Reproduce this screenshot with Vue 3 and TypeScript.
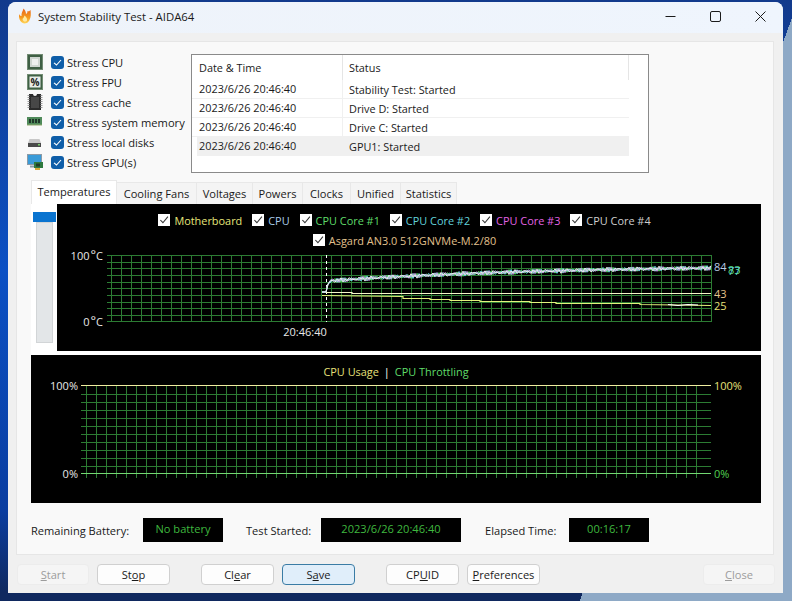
<template>
  <div class="desktop">
    <div class="window">
      <header class="titlebar">
        <svg class="flame" width="14" height="16" viewBox="0 0 14 16">
          <defs>
            <linearGradient id="flameFill" x1="0" y1="0" x2="0" y2="1">
              <stop offset="0" stop-color="#e8641c" />
              <stop offset="0.6" stop-color="#f59a1e" />
              <stop offset="1" stop-color="#ffd65a" />
            </linearGradient>
          </defs>
          <path d="M1 6 C2 8 3 8 3.5 8 C3 5 5 3 5.5 0.5 C7 2 8 4 8 6 C9 5.5 9.5 4.5 9.5 3 C11 4 12 2.5 12.5 2 C13 6 13 9 11.5 12 C10.5 14.5 8.5 15.5 6.5 15.5 C3.5 15.5 0.5 12 1 6 Z" fill="url(#flameFill)" />
          <path d="M4.5 11 C5.5 10 6 9 6.5 7.5 C8 9 9.5 10 9 12.5 C8.5 14 5 14.5 4.5 11 Z" fill="#ffeaa0" />
        </svg>
        <span class="title">System Stability Test - AIDA64</span>
        <div class="controls">
          <svg width="11" height="11" viewBox="0 0 11 11"><path d="M0.5 5.5H10.5" stroke="#1b1b1b" fill="none" /></svg>
          <svg width="11" height="11" viewBox="0 0 11 11"><rect x="0.5" y="0.5" width="10" height="10" rx="1.5" stroke="#1b1b1b" fill="none" /></svg>
          <svg width="11" height="11" viewBox="0 0 11 11"><path d="M0.5 0.5L10.5 10.5M10.5 0.5L0.5 10.5" stroke="#1b1b1b" fill="none" /></svg>
        </div>
      </header>

      <main class="panel">
        <section class="top-row">
          <ul class="stress-list">
            <li v-for="item in stressItems" :key="item.label" class="stress-item">
              <span class="stress-icon">
                <svg v-if="item.icon === 'cpu'" width="16" height="16" viewBox="0 0 16 16">
                  <rect width="16" height="16" fill="#3f5f44" />
                  <rect x="0.5" y="0.5" width="15" height="15" fill="none" stroke="#a7b8a2" stroke-dasharray="1 1" />
                  <rect x="3" y="3" width="10" height="10" fill="#cfd6d0" />
                  <rect x="5" y="5" width="6" height="6" fill="#eef0ee" />
                </svg>
                <svg v-else-if="item.icon === 'fpu'" width="16" height="16" viewBox="0 0 16 16">
                  <rect width="16" height="16" fill="#3f6044" />
                  <rect x="0.5" y="0.5" width="15" height="15" fill="none" stroke="#a7b8a2" stroke-dasharray="1 1" />
                  <rect x="2.5" y="2.5" width="11" height="11" fill="#e8ece8" />
                  <text x="8" y="12" text-anchor="middle" class="fpu-mark">%</text>
                </svg>
                <svg v-else-if="item.icon === 'cache'" width="16" height="16" viewBox="0 0 16 16">
                  <path d="M2 0H6A2 2 0 0 0 10 0H14V16H2Z" fill="#2b2b2b" />
                  <path d="M1.5 1V15M14.5 1V15" stroke="#9c9c9c" stroke-width="2" stroke-dasharray="1 1" />
                  <rect x="4" y="3" width="8" height="11" fill="#474747" />
                </svg>
                <svg v-else-if="item.icon === 'ram'" width="16" height="16" viewBox="0 0 16 16">
                  <rect x="0" y="3" width="15" height="8" fill="#4f8a5a" />
                  <path d="M2 5H4V9H2ZM5 5H7V9H5ZM8 5H10V9H8ZM11 5H13V9H11Z" fill="#20382a" />
                  <path d="M0 11H15" stroke="#8fa86c" />
                </svg>
                <svg v-else-if="item.icon === 'disk'" width="16" height="16" viewBox="0 0 16 16">
                  <path d="M2.5 5H12.5L14 9H1Z" fill="#c8c8c8" />
                  <rect x="1" y="9" width="13" height="4" fill="#4a4a4a" />
                  <rect x="11" y="10" width="2" height="1.5" fill="#7cd06e" />
                </svg>
                <svg v-else width="16" height="16" viewBox="0 0 16 16">
                  <rect x="0" y="0" width="15" height="11" fill="#8c9aa6" />
                  <rect x="1" y="1" width="13" height="9" fill="#3a9bd8" />
                  <path d="M3 12.5H8" stroke="#8c9aa6" stroke-width="2" />
                  <rect x="7" y="8" width="9" height="6" fill="#2f7a3e" />
                  <rect x="9" y="9.5" width="4" height="3" fill="#1f3d28" />
                  <rect x="8" y="14" width="5" height="2" fill="#d6a83a" />
                </svg>
              </span>
              <span class="check-blue">
                <svg width="9" height="9" viewBox="0 0 9 9"><path d="M1 4.8L3.5 7L8 2" fill="none" stroke="#fff" stroke-width="1.1" /></svg>
              </span>
              <span class="stress-label">{{ item.label }}</span>
            </li>
          </ul>

          <div class="log">
            <div class="log-head">
              <span class="col-date">Date &amp; Time</span>
              <span class="col-status">Status</span>
              <span class="col-rest"></span>
            </div>
            <div v-for="(row, i) in logRows" :key="row" class="log-row" :class="{ selected: i === logRows.length - 1 }">
              <span class="col-date">2023/6/26 20:46:40</span>
              <span class="col-status">{{ row }}</span>
            </div>
          </div>
        </section>

        <nav class="tabs">
          <span v-for="(tab, i) in tabs" :key="tab.name" class="tab" :class="{ active: i === 0 }" :style="{ width: tab.width + 'px' }">{{ tab.name }}</span>
        </nav>

        <section class="temp-row">
          <div class="side-scroll">
            <div class="side-thumb"></div>
            <div class="side-track"></div>
          </div>
          <div class="chart temp-chart">
            <div class="legend">
              <div class="legend-line">
                <label v-for="s in sensors" :key="s.name" class="legend-item" :style="{ color: s.color }">
                  <span class="check-white">
                    <svg width="10" height="10" viewBox="0 0 11 11"><path d="M1.5 5.5L4.3 8.5L9.8 1.8" fill="none" stroke="#333" stroke-width="1.2" /></svg>
                  </span>{{ s.name }}
                </label>
              </div>
              <div class="legend-line">
                <label class="legend-item drive">
                  <span class="check-white">
                    <svg width="10" height="10" viewBox="0 0 11 11"><path d="M1.5 5.5L4.3 8.5L9.8 1.8" fill="none" stroke="#333" stroke-width="1.2" /></svg>
                  </span>Asgard AN3.0 512GNVMe-M.2/80
                </label>
              </div>
            </div>
            <svg class="plot" width="704" height="105" viewBox="57 246 704 105">
              <g class="grid">
                <path v-for="y in tempRows" :key="y" :d="`M107 ${y}H712`" />
                <path v-for="x in tempCols" :key="x" :d="`M${x} 255V322`" />
              </g>
              <path d="M326.5 255V322" class="cursor" />
              <polyline :points="drivePoints" class="trace" stroke="#f4f6c8" />
              <polyline :points="boardPoints" class="trace" stroke="#e2f27c" />
              <polyline points="668,304.5 678,305.5 688,304.5 698,305" class="trace" stroke="#ffffff" />
              <polyline v-for="c in coreTraces" :key="c.color" :points="c.points" class="trace thin" :stroke="c.color" />
              <text x="103" y="260" text-anchor="end" fill="#e8e8e8">100<tspan class="deg" dx="1" dy="-1">°</tspan><tspan dy="1">C</tspan></text>
              <text x="103" y="326" text-anchor="end" fill="#e8e8e8">0<tspan class="deg" dx="1" dy="-1">°</tspan><tspan dy="1">C</tspan></text>
              <text x="305" y="336" text-anchor="middle" fill="#e8e8e8">20:46:40</text>
              <text x="714" y="271" fill="#b9cbe6">84</text>
              <text x="728" y="274" fill="#58d878">83</text>
              <text x="728" y="275" fill="#60cfd8">77</text>
              <text x="714" y="298" fill="#e6c48c">43</text>
              <text x="714" y="310" fill="#e6e07a">25</text>
            </svg>
          </div>
        </section>

        <section class="chart usage-chart">
          <div class="usage-legend">
            <span class="usage-name">CPU Usage</span>
            <span class="usage-sep">|</span>
            <span class="throttle-name">CPU Throttling</span>
          </div>
          <svg class="plot" width="730" height="128" viewBox="31 375 730 128">
            <g class="grid">
              <path v-for="y in usageRows" :key="y" :d="`M81 ${y}H711`" />
              <path v-for="x in usageCols" :key="x" :d="`M${x} 385V478`" />
            </g>
            <path d="M81 385.5H711" class="usage-top" />
            <path d="M81 473.5H711" class="usage-bottom" />
            <text x="78" y="390" text-anchor="end" fill="#e8e8e8">100%</text>
            <text x="78" y="478" text-anchor="end" fill="#e8e8e8">0%</text>
            <text x="714" y="390" fill="#e6e07a">100%</text>
            <text x="714" y="478" fill="#50d050">0%</text>
          </svg>
        </section>

        <section class="status-row">
          <span class="status-label battery">Remaining Battery:</span>
          <span class="status-value battery-value">No battery</span>
          <span class="status-label started">Test Started:</span>
          <span class="status-value started-value">2023/6/26 20:46:40</span>
          <span class="status-label elapsed">Elapsed Time:</span>
          <span class="status-value elapsed-value">00:16:17</span>
        </section>
      </main>

      <footer class="actions">
        <div class="btn-group">
          <button class="btn off"><u>S</u>tart</button>
          <button class="btn">St<u>o</u>p</button>
        </div>
        <div class="btn-group">
          <button class="btn">Cl<u>e</u>ar</button>
          <button class="btn default">S<u>a</u>ve</button>
        </div>
        <div class="btn-group">
          <button class="btn">CP<u>U</u>ID</button>
          <button class="btn"><u>P</u>references</button>
        </div>
        <button class="btn off close"><u>C</u>lose</button>
      </footer>
    </div>
  </div>
</template>

<script setup lang="ts">
const stressItems = [
  { label: 'Stress CPU', icon: 'cpu' },
  { label: 'Stress FPU', icon: 'fpu' },
  { label: 'Stress cache', icon: 'cache' },
  { label: 'Stress system memory', icon: 'ram' },
  { label: 'Stress local disks', icon: 'disk' },
  { label: 'Stress GPU(s)', icon: 'gpu' },
]

const logRows = ['Stability Test: Started', 'Drive D: Started', 'Drive C: Started', 'GPU1: Started']

const tabs = [
  { name: 'Temperatures', width: 86 },
  { name: 'Cooling Fans', width: 80 },
  { name: 'Voltages', width: 56 },
  { name: 'Powers', width: 50 },
  { name: 'Clocks', width: 48 },
  { name: 'Unified', width: 50 },
  { name: 'Statistics', width: 56 },
]

const sensors = [
  { name: 'Motherboard', color: '#e6e67a' },
  { name: 'CPU', color: '#a9cbe8' },
  { name: 'CPU Core #1', color: '#5fdc6a' },
  { name: 'CPU Core #2', color: '#62d2dc' },
  { name: 'CPU Core #3', color: '#e463e4' },
  { name: 'CPU Core #4', color: '#cfcfcf' },
]

const range = (from: number, to: number, step: number) => {
  const out: number[] = []
  for (let v = from; v <= to + 0.01; v += step) out.push(v)
  return out
}

const tempRows = range(255.5, 322, 6.65).map((y) => Math.round(y - 0.5) + 0.5)
const tempCols = range(111.5, 712, 10)
const usageRows = range(394.5, 467, 8)
const usageCols = range(86.5, 706, 10)

// noisy core temperature line, repeatable for every render
const coreLine = (seed: number) => {
  const pts = ['322,292', '326,292', '328,284']
  for (let x = 331; x <= 711; x += 2) {
    const rise = (1 - Math.exp(-(x - 327) / 220)) / 0.825
    const base = 281 - 13 * rise
    const noise = Math.sin(x * 1.7 + seed * 3.1) * 1.6 + Math.sin(x * 0.61 + seed) * 1
    pts.push(`${x},${(base + noise).toFixed(1)}`)
  }
  return pts.join(' ')
}

const coreTraces = [
  { color: '#62d2dc', points: coreLine(1) },
  { color: '#5fdc6a', points: coreLine(2) },
  { color: '#c49ae0', points: coreLine(3) },
  { color: '#a9cbe8', points: coreLine(4) },
  { color: '#ececec', points: coreLine(5) },
]

const drivePoints = '322,292.5 352,292.5 352,293.5 711,293.5'
const boardPoints =
  '322,295.5 403,296.5 403,298.5 430,298.5 430,299.5 450,299.5 450,300.5 480,300.5 480,301.5 530,301.5 530,302.5 556,302.5 556,303.5 640,303.5 640,304.5 711,305.5'
</script>

<style>
html,
body {
  margin: 0;
  background: #12306e;
}
</style>

<style scoped>
.desktop {
  width: 792px;
  height: 601px;
  box-sizing: border-box;
  padding: 2px 9px 8px 8px;
  overflow: hidden;
  background:
    linear-gradient(110deg, transparent 0 79%, #8ea9c6 79%),
    linear-gradient(180deg, #123a8c 0%, #0b50c4 45%, #0a3da0 85%, #10295f 98.6%);
  font-family: "Open Sans", "Liberation Sans", sans-serif;
  font-size: 11.1px;
  color: #1a1a1a;
}

.window {
  height: 591px;
  display: flex;
  flex-direction: column;
  background: #f0f0f0;
  border-radius: 8px 8px 0 0;
  overflow: hidden;
}

.titlebar {
  height: 31px;
  flex: none;
  box-sizing: border-box;
  display: flex;
  align-items: center;
  padding: 0 0 3px 10px;
  margin-bottom: 8px;
  background: linear-gradient(90deg, #eef3fa, #eff5fd);
}

.flame {
  margin-right: 6px;
}

.title {
  font-size: 11.35px;
}

.controls {
  margin-left: auto;
  display: flex;
  gap: 34px;
  padding-right: 17px;
}

.panel {
  margin: 0 9px 0 8px;
  height: 514px;
  flex: none;
  box-sizing: border-box;
  padding: 12px 12px 0 14px;
  background: #f9f9f9;
  border: 1px solid #e6e6e6;
}

.top-row {
  display: flex;
  height: 120px;
}

.stress-list {
  list-style: none;
  margin: -2px 0 0 -4px;
  padding: 0;
  width: 164px;
  flex: none;
}

.stress-item {
  height: 20px;
  display: flex;
  align-items: center;
  font-size: 11.15px;
}

.stress-icon {
  width: 16px;
  height: 16px;
  margin-right: 8px;
  display: block;
}

.stress-icon svg {
  display: block;
}

.fpu-mark {
  font-size: 10px;
  font-weight: 700;
  fill: #222;
}

.check-blue {
  width: 13px;
  height: 13px;
  border-radius: 3px;
  background: #0f5ea8;
  display: flex;
  align-items: center;
  justify-content: center;
  margin-right: 3px;
}

.log {
  width: 458px;
  height: 119px;
  box-sizing: border-box;
  border: 1px solid #8a8a8a;
  background: #fff;
  font-size: 10.87px;
}

.log-head {
  height: 25px;
  display: flex;
  align-items: center;
}

.log-head span {
  height: 25px;
  line-height: 25px;
  box-sizing: border-box;
  border-right: 1px solid #e5e5e5;
}

.col-date {
  width: 151px;
  padding-left: 7px;
  box-sizing: border-box;
  flex: none;
}

.col-status {
  width: 286px;
  padding-left: 6px;
  box-sizing: border-box;
  flex: none;
}

.col-rest {
  flex: 1;
  border-right: none !important;
}

.log-row {
  height: 19px;
  display: flex;
  align-items: center;
  width: 437px;
  box-sizing: border-box;
  border-bottom: 1px solid #f0f0f0;
}

.log-row .col-date {
  border-right: 1px solid #f0f0f0;
  height: 19px;
  line-height: 18px;
}

.log-row.selected {
  background: linear-gradient(90deg, #fff 5px, #f0f0f0 5px);
  border-bottom: none;
}

.tabs {
  display: flex;
  height: 23px;
  margin-top: 7px;
  align-items: flex-end;
}

.tab {
  height: 22px;
  line-height: 21px;
  box-sizing: border-box;
  text-align: center;
  background: #f4f4f4;
  border: 1px solid #e8e8e8;
  border-bottom: none;
  border-left: none;
  flex: none;
}

.tab.active {
  height: 24px;
  line-height: 21px;
  background: #fff;
  border-left: 1px solid #e8e8e8;
}

.temp-row {
  display: flex;
  background: #fff;
  height: 151px;
  align-items: flex-start;
}

.side-scroll {
  width: 26px;
  flex: none;
  padding-top: 8px;
}

.side-thumb {
  width: 23px;
  height: 10px;
  margin-left: 2px;
  background: #0a74d0;
}

.side-track {
  width: 17px;
  height: 121px;
  margin-left: 5px;
  box-sizing: border-box;
  background: #e3e6e8;
  border: 1px solid #d2d5d7;
}

.chart {
  background: #000;
}

.temp-chart {
  width: 704px;
  height: 147px;
  flex: none;
}

.legend {
  height: 42px;
  box-sizing: border-box;
  padding: 6px 9px 0 0;
}

.legend-line {
  height: 20px;
  display: flex;
  justify-content: center;
  gap: 10px;
}

.legend-item {
  display: flex;
  align-items: center;
  font-size: 10.9px;
}

.legend-item.drive {
  color: #e2c08e;
}

.check-white {
  width: 12px;
  height: 12px;
  margin-right: 4px;
  background: #fff;
  display: flex;
  align-items: center;
  justify-content: center;
}

.plot {
  display: block;
}

.plot text {
  font-size: 11px;
}

.plot .deg {
  font-size: 13px;
}

.grid path {
  stroke: #2c7c33;
  stroke-width: 1;
  fill: none;
}

.cursor {
  stroke: #fff;
  stroke-dasharray: 3 3;
  fill: none;
}

.trace {
  fill: none;
  stroke-width: 1.2;
}

.trace.thin {
  stroke-width: 1;
}

.usage-chart {
  width: 730px;
  height: 148px;
}

.usage-legend {
  height: 20px;
  box-sizing: border-box;
  padding-top: 12px;
  display: flex;
  justify-content: center;
  align-items: center;
  gap: 5px;
  font-size: 10.9px;
  color: #fff;
}

.usage-name {
  color: #e6e07a;
}

.throttle-name {
  color: #5fdc6a;
}

.usage-top {
  stroke: #f0eda0;
  fill: none;
}

.usage-bottom {
  stroke: #72d872;
  fill: none;
}

.status-row {
  display: flex;
  align-items: center;
  height: 24px;
  margin-top: 15px;
}

.status-value {
  height: 24px;
  line-height: 22px;
  background: #000;
  color: #3fb83f;
  text-align: center;
  flex: none;
}

.battery {
  width: 112px;
}

.battery-value {
  width: 80px;
}

.started {
  width: 98px;
  padding-left: 23px;
  box-sizing: border-box;
}

.started-value {
  width: 140px;
}

.elapsed {
  width: 108px;
  padding-left: 24px;
  box-sizing: border-box;
}

.elapsed-value {
  width: 80px;
}

.actions {
  display: flex;
  gap: 31px;
  padding: 9px 8px 0 9px;
  align-items: flex-start;
}

.btn-group {
  display: flex;
  gap: 8px;
}

.btn {
  width: 73px;
  height: 21px;
  padding: 0;
  box-sizing: border-box;
  font: inherit;
  color: #1a1a1a;
  background: #fdfdfd;
  border: 1px solid #d0d0d0;
  border-radius: 4px;
}

.btn.off {
  width: 72px;
  color: #9c9c9c;
  background: #f5f5f5;
  border-color: #ececec;
}

.btn.default {
  background: #e0eefa;
  border-color: #3a7ca5;
}

.btn.close {
  margin-left: auto;
}
</style>
